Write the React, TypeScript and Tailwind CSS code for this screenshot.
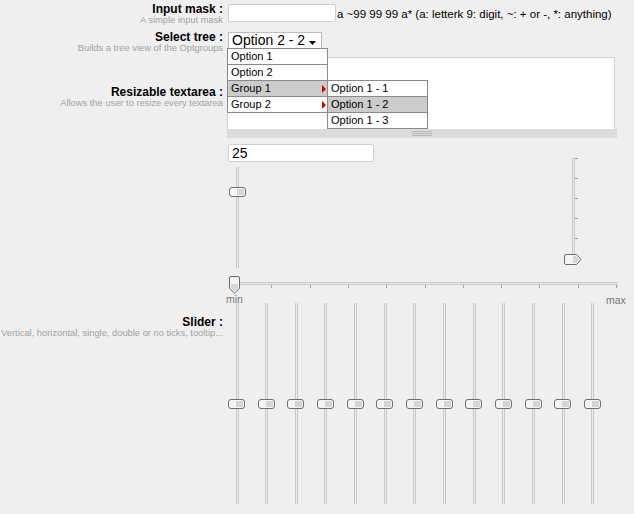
import React from 'react';

const Label: React.FC<{ title: string; sub: string; className?: string }> = ({ title, sub, className }) => (
    <div className={`w-[224px] shrink-0 pr-[1px] text-right whitespace-nowrap ${className || ''}`}>
        <div className="text-[12px] leading-[12px] font-bold text-black">{title}</div>
        <div className="text-[9.33px] leading-[11px] text-[#a3a3a3]">{sub}</div>
    </div>
);

// flat handle used on the vertical sliders
const Handle: React.FC = () => (
    <div className="flex h-[10px] w-[17px] rounded-[3px] border border-[#6f6f6f] bg-[#f4f4f4] p-[1px]">
        <div className="flex-1" />
        <div className="w-[7px] rounded-r-[1px] bg-[#d6d6d6]" />
    </div>
);

const VTrack: React.FC<{ className?: string }> = ({ className }) => (
    <div className={`w-[3px] border-x border-[#c8c8c8] bg-[#ececec] ${className || ''}`} />
);

const dropdownItems = ['Option 1', 'Option 2', 'Group 1', 'Group 2'];
const subItems = ['Option 1 - 1', 'Option 1 - 2', 'Option 1 - 3'];
const hTicks = [1, 2, 3, 4, 5, 6, 7, 8, 9, 10];
const vTicks = [0, 1, 2, 3, 4];
const sliders = Array.from({ length: 13 }, (_, i) => i);

const Arrow: React.FC = () => (
    <svg width="4" height="8" viewBox="0 0 4 8" className="absolute right-[1px] top-[4px]">
        <path d="M0 0 L4 4 L0 8 Z" fill="#cc0000" />
    </svg>
);

export default function App() {
    return (
        <div
            className="relative h-[514px] w-[634px] overflow-hidden bg-[#efefef] text-[11px] text-black"
            style={{ fontFamily: '"Liberation Sans", Arial, sans-serif' }}
        >
            {/* Input mask */}
            <div className="flex h-[30px] pt-[3px]">
                <Label title="Input mask :" sub="A simple input mask" />
                <div className="flex items-start pl-[4px]">
                    <div className="mt-[1px] h-[18px] w-[108px] rounded-[2px] border border-[#d0d0d0] bg-white" />
                    <span className="mt-[5px] pl-[1px] text-[11.5px] leading-[12px]">
                        a ~99 99 99 a* (a: letterk 9: digit, ~: + or -, *: anything)
                    </span>
                </div>
            </div>

            {/* Select tree */}
            <div className="relative z-10 flex h-[27px]">
                <Label title="Select tree :" sub="Builds a tree view of the Optgroups" className="pt-[1px]" />
                <div className="relative pl-[4px]">
                    <div className="relative mt-[2px] flex h-[17px] w-[94px] items-center border border-[#bdbdbd] bg-white pl-[3px] text-[14px] leading-[15px]">
                        Option 2 - 2
                        <svg width="7" height="4" viewBox="0 0 7 4" className="absolute right-[5px] top-[8px]">
                            <path d="M0 0 H7 L3.5 4 Z" fill="#000" />
                        </svg>
                    </div>
                    <div className="absolute left-[3px] top-[18px] w-[101px] border border-[#8a8a8a] bg-white">
                        {dropdownItems.map((item, i) => (
                            <div
                                key={item}
                                className={`relative pl-[3px] ${i > 0 ? 'h-[16px] border-t border-[#8a8a8a] leading-[15px]' : 'h-[15px] leading-[15px]'} ${item === 'Group 1' ? 'bg-[#cccccc]' : ''}`}
                            >
                                {item}
                                {item.startsWith('Group') && <Arrow />}
                            </div>
                        ))}
                    </div>
                    <div className="absolute left-[103px] top-[50px] w-[101px] border border-[#8a8a8a] bg-white">
                        {subItems.map((item, i) => (
                            <div
                                key={item}
                                className={`pl-[3px] leading-[15px] ${i > 0 ? 'h-[16px] border-t border-[#8a8a8a]' : 'h-[15px]'} ${i === 1 ? 'bg-[#cccccc]' : ''}`}
                            >
                                {item}
                            </div>
                        ))}
                    </div>
                </div>
            </div>

            {/* Resizable textarea */}
            <div className="flex h-[87px]">
                <Label title="Resizable textarea :" sub="Allows the user to resize every textarea" className="pt-[29px]" />
                <div className="pl-[3px]">
                    <div className="h-[72px] w-[388px] border border-b-0 border-[#cfcfcf] bg-white" />
                    <div className="flex h-[9px] w-[390px] flex-col items-center justify-center gap-[1px] bg-[#dcdcdc]">
                        <div className="h-px w-[20px] bg-[#b8b8b8]" />
                        <div className="h-px w-[20px] bg-[#b8b8b8]" />
                        <div className="h-px w-[20px] bg-[#b8b8b8]" />
                    </div>
                </div>
            </div>

            {/* Slider demos */}
            <div className="h-[159px] pl-[228px]">
                <div className="flex h-[132px]">
                    <div className="w-[146px]">
                        <div className="flex h-[18px] items-center rounded-[2px] border border-[#d0d0d0] bg-white pl-[3px] text-[14px]">
                            25
                        </div>
                        <div className="relative ml-[8px] mt-[5px] h-[101px] w-[3px]">
                            <VTrack className="h-full" />
                            <div className="absolute left-[-7px] top-[20px]">
                                <Handle />
                            </div>
                        </div>
                    </div>
                    <div className="relative ml-[198px] mt-[14px] h-[100px] w-[3px]">
                        <VTrack className="h-full" />
                        {vTicks.map(t => (
                            <div key={t} className="absolute left-[3px] h-px w-[3px] bg-[#a0a0a0]" style={{ top: t * 20 }} />
                        ))}
                        <svg width="18" height="11" viewBox="0 0 18 11" className="absolute left-[-8px] top-[96px]">
                            <path d="M2 0.5 H12.5 L17 5.5 L12.5 10.5 H2 Q0.5 10.5 0.5 9 V2 Q0.5 0.5 2 0.5 Z" fill="#f4f4f4" stroke="#6f6f6f" />
                            <path d="M9 2 H12 L15 5.5 L12 9 H9 Z" fill="#d6d6d6" />
                        </svg>
                    </div>
                </div>
                {/* horizontal slider */}
                <div className="relative ml-[6px] h-[27px] w-[384px]">
                    <div className="absolute left-0 top-[6px] h-[3px] w-full border-y border-[#c8c8c8] bg-[#ececec]" />
                    {hTicks.map(t => (
                        <div key={t} className="absolute top-[9px] h-[3px] w-px bg-[#a0a0a0]" style={{ left: t * 38.3 - 1 }} />
                    ))}
                    <svg width="11" height="18" viewBox="0 0 11 18" className="absolute left-[-5px] top-0">
                        <path d="M2 0.5 H9 Q10.5 0.5 10.5 2 V12.5 L5.5 17 L0.5 12.5 V2 Q0.5 0.5 2 0.5 Z" fill="#f4f4f4" stroke="#6f6f6f" />
                        <path d="M2 8 H9 V12 L5.5 15 L2 12 Z" fill="#d6d6d6" />
                    </svg>
                    <span className="absolute left-[-8px] top-[18px] text-[10.5px] leading-[11px] text-[#7a7a7a]">min</span>
                    <span className="absolute left-[372px] top-[19px] text-[10.5px] leading-[11px] text-[#7a7a7a]">max</span>
                </div>
            </div>

            {/* Slider */}
            <div className="flex">
                <Label
                    title="Slider :"
                    sub="Vertical, horizontal, single, double or no ticks, tooltip..."
                    className="pt-[13px]"
                />
                <div className="flex gap-[11.67px] pl-[4px]">
                    {sliders.map(i => (
                        <div key={i} className="relative flex h-[201px] w-[18px] justify-center">
                            <VTrack className="h-full" />
                            <div className="absolute left-0 top-[96px]">
                                <Handle />
                            </div>
                        </div>
                    ))}
                </div>
            </div>
        </div>
    );
}
